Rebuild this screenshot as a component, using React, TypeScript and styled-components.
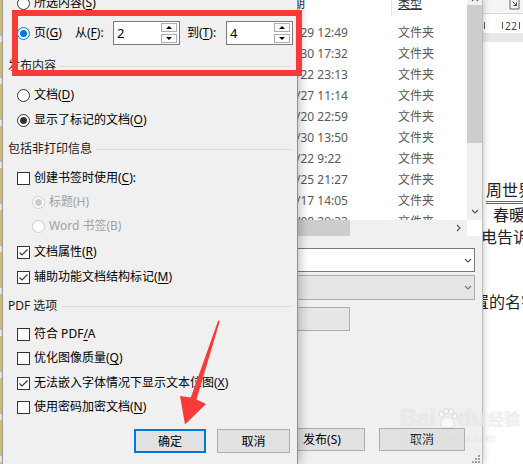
import React from "react";
import styled, { createGlobalStyle } from "styled-components";

const Global = createGlobalStyle`
  html, body { margin: 0; padding: 0; background: #fff; }
  body { font-family: "Noto Sans", "Noto Sans CJK SC", sans-serif; }
`;

const FONT = `"Noto Sans", "Noto Sans CJK SC", sans-serif`;

const Desktop = styled.div`
  position: relative;
  width: 523px;
  height: 464px;
  overflow: hidden;
  display: flex;
  font-family: ${FONT};
  font-size: 12px;
  line-height: 16px;
  color: #000;
  background: #fff;
`;

const LeftEdge = styled.div`
  width: 2px;
  flex: none;
  background: repeating-linear-gradient(
    to bottom,
    #d9c47c 0 34px,
    #bdbdbd 34px 36px,
    #ededed 36px 42px
  );
`;

/* ---------- Options dialog ---------- */

const OptionsDialog = styled.div`
  position: relative;
  z-index: 3;
  width: 296px;
  flex: none;
  box-sizing: border-box;
  background: #f0f0f0;
  border-left: 1px solid #9a9a9a;
  border-right: 1px solid #8f8f8f;
  box-shadow: 3px 0 9px rgba(0, 0, 0, 0.22);
  display: flex;
  flex-direction: column;
  padding-left: 5px;
`;

const Row = styled.div<{ $mt: number; $indent?: number }>`
  height: 24px;
  flex: none;
  display: flex;
  align-items: center;
  margin-top: ${(p) => p.$mt}px;
  padding-left: ${(p) => p.$indent ?? 0}px;
  white-space: nowrap;
`;

const GroupTitle = styled.span`
  color: #1a1a1a;
`;

const GroupLine = styled.span`
  flex: 1;
  height: 1px;
  background: #dcdcdc;
  margin: 1px 6px 0 4px;
`;

type RadioState = "off" | "on" | "blue" | "disOn" | "disOff";

const radioBorder: Record<RadioState, string> = {
  off: "#333333",
  on: "#333333",
  blue: "#0078d7",
  disOn: "#cccccc",
  disOff: "#cccccc",
};
const radioDot: Record<RadioState, string> = {
  off: "transparent",
  on: "#333333",
  blue: "#0078d7",
  disOn: "#cccccc",
  disOff: "transparent",
};

const RadioCircle = styled.span<{ $state: RadioState }>`
  width: 13px;
  height: 13px;
  box-sizing: border-box;
  border-radius: 50%;
  border: 1px solid ${(p) => radioBorder[p.$state]};
  background: #fff;
  flex: none;
  display: flex;
  align-items: center;
  justify-content: center;
  &::after {
    content: "";
    width: 7px;
    height: 7px;
    border-radius: 50%;
    background: ${(p) => radioDot[p.$state]};
  }
`;

const CheckBox = styled.span`
  width: 13px;
  height: 13px;
  box-sizing: border-box;
  border: 1px solid #333;
  background: #fff;
  flex: none;
  display: flex;
  align-items: center;
  justify-content: center;
`;

const Label = styled.span<{ $disabled?: boolean }>`
  margin-left: 4px;
  color: ${(p) => (p.$disabled ? "#a2a2a2" : "#000")};
`;

const U = styled.span`
  text-decoration: underline;
  text-underline-offset: 2px;
`;

const RadioItem = styled.div<{ $w?: number }>`
  display: flex;
  align-items: center;
  width: ${(p) => (p.$w ? `${p.$w}px` : "auto")};
  flex: none;
`;

const FieldLabel = styled.span<{ $w: number; $ml?: number }>`
  width: ${(p) => p.$w}px;
  margin-left: ${(p) => p.$ml ?? 0}px;
  flex: none;
`;

const Spin = styled.div`
  width: 67px;
  height: 24px;
  box-sizing: border-box;
  border: 1px solid #7a7a7a;
  background: #fff;
  display: flex;
  align-items: center;
  padding: 0 2px 0 3px;
  flex: none;
`;

const SpinValue = styled.span`
  flex: 1;
  font-size: 13px;
`;

const SpinButtons = styled.div`
  display: flex;
  flex-direction: column;
  gap: 2px;
  width: 16px;
`;

const SpinBtn = styled.div<{ $up?: boolean }>`
  height: 9px;
  box-sizing: border-box;
  border: 1px solid #adadad;
  background: #fcfcfc;
  display: flex;
  align-items: center;
  justify-content: center;
  &::after {
    content: "";
    border-left: 3px solid transparent;
    border-right: 3px solid transparent;
    ${(p) =>
      p.$up ? "border-bottom: 3px solid #000;" : "border-top: 3px solid #000;"}
  }
`;

const ButtonRow = styled.div`
  display: flex;
  justify-content: flex-end;
  gap: 11px;
  padding-right: 7px;
  margin-top: 10px;
`;

const DialogButton = styled.button<{ $primary?: boolean; $w: number }>`
  width: ${(p) => p.$w}px;
  height: 24px;
  box-sizing: border-box;
  background: #e1e1e1;
  border: ${(p) => (p.$primary ? "2px solid #0078d7" : "1px solid #adadad")};
  font-family: ${FONT};
  font-size: 12px;
  color: #000;
  padding: 0;
`;

/* ---------- Publish window (behind) ---------- */

const PublishWindow = styled.div`
  position: relative;
  z-index: 2;
  width: 185px;
  flex: none;
  box-sizing: border-box;
  background: #f0f0f0;
  border-right: 1px solid #bcbcbc;
  box-shadow: 2px 0 5px rgba(0, 0, 0, 0.16);
  display: flex;
  flex-direction: column;
  overflow: hidden;
`;

const ListArea = styled.div`
  display: flex;
  height: 220px;
  flex: none;
`;

const ListBody = styled.div`
  width: 169px;
  background: #fff;
  overflow: hidden;
  display: flex;
  flex-direction: column;
  color: #595959;
`;

const ListHeader = styled.div`
  display: flex;
  height: 28px;
  margin-top: -6px;
  flex: none;
  align-items: flex-start;
`;

const HeaderDate = styled.span`
  width: 95px;
  margin-left: -5px;
  padding-top: 2px;
  color: #333;
  flex: none;
`;

const HeaderSep = styled.span`
  width: 1px;
  height: 22px;
  background: #e5e5e5;
  flex: none;
  margin-left: 3px;
`;

const HeaderType = styled.span`
  padding: 2px 0 0 6px;
  color: #333;
  text-decoration: underline;
  text-underline-offset: 1px;
`;

const ListRow = styled.div`
  display: flex;
  height: 21px;
  align-items: center;
  flex: none;
`;

const DateCell = styled.span`
  width: 102px;
  margin-left: -2px;
  flex: none;
`;

const VScroll = styled.div`
  width: 15px;
  background: #f0f0f0;
  display: flex;
  flex-direction: column;
  align-items: stretch;
`;

const ScrollArrow = styled.div<{ $h: number; $w?: number; $top?: boolean }>`
  height: ${(p) => p.$h}px;
  width: ${(p) => (p.$w ? `${p.$w}px` : "auto")};
  flex: none;
  display: flex;
  align-items: ${(p) => (p.$top ? "flex-start" : "center")};
  margin-top: ${(p) => (p.$top ? "-3px" : "0")};
  justify-content: center;
`;

const VThumb = styled.div`
  height: 138px;
  background: #cdcdcd;
  flex: none;
`;

const Spacer = styled.div`
  flex: 1;
`;

const HScrollRow = styled.div`
  display: flex;
  height: 16px;
  flex: none;
`;

const HScroll = styled.div`
  width: 169px;
  background: #f0f0f0;
  display: flex;
  align-items: stretch;
`;

const HThumb = styled.div`
  width: 52px;
  background: #cdcdcd;
`;

const Corner = styled.div`
  flex: 1;
  background: #fff;
`;

const Select = styled.div<{ $disabled?: boolean; $h: number; $mt: number }>`
  height: ${(p) => p.$h}px;
  margin-top: ${(p) => p.$mt}px;
  margin-right: 7px;
  margin-left: -4px;
  box-sizing: border-box;
  border: 1px solid ${(p) => (p.$disabled ? "#adadad" : "#7a7a7a")};
  background: ${(p) => (p.$disabled ? "#e5e5e5" : "#fff")};
  display: flex;
  align-items: center;
  justify-content: flex-end;
  padding-right: 2px;
  flex: none;
`;

const TextBox = styled.div`
  width: 56px;
  height: 24px;
  margin-top: 7px;
  margin-left: -4px;
  box-sizing: border-box;
  border: 1px solid #adadad;
  background: #e6e6e6;
  flex: none;
`;

const PubButtons = styled.div`
  margin-top: auto;
  margin-bottom: 13px;
  display: flex;
  justify-content: flex-end;
  gap: 14px;
  padding-right: 17px;
`;

const PubButton = styled.div`
  width: 86px;
  height: 23px;
  flex: none;
  box-sizing: border-box;
  background: #e1e1e1;
  border: 1px solid #adadad;
  display: flex;
  align-items: center;
  justify-content: center;
  color: #000;
`;

const Grip = styled.svg`
  position: absolute;
  right: 2px;
  bottom: 1px;
`;

/* ---------- Word page (far behind) ---------- */

const WordPage = styled.div`
  flex: 1;
  background: #fff;
  display: flex;
  flex-direction: column;
  overflow: hidden;
  font-family: "Noto Sans CJK SC", sans-serif;
`;

const RibbonStrip = styled.div`
  height: 13px;
  flex: none;
  background: #f5f5f5;
  border-bottom: 1px solid #d5d5d5;
  display: flex;
  justify-content: flex-end;
  align-items: flex-start;
  padding-right: 3px;
`;

const Ruler = styled.div`
  height: 19px;
  flex: none;
  display: flex;
  align-items: center;
  padding-top: 4px;
  box-sizing: border-box;
  font-family: ${FONT};
  font-size: 10px;
  color: #444;
`;

const Tick = styled.span<{ $ml: number }>`
  width: 1px;
  height: 7px;
  background: #555;
  margin-left: ${(p) => p.$ml}px;
  flex: none;
`;

const RulerNum = styled.span`
  margin: 0 2px;
  letter-spacing: 0.5px;
`;

const GreyBand = styled.div`
  height: 9px;
  flex: none;
  background: #e8e8e8;
`;

const PageLine = styled.div<{ $mt: number; $ml: number }>`
  height: 22px;
  flex: none;
  margin-top: ${(p) => p.$mt}px;
  margin-left: ${(p) => p.$ml}px;
  font-size: 16px;
  line-height: 22px;
  color: #222;
  white-space: nowrap;
`;

const Linked = styled.span`
  border-bottom: 3px double #3a68c8;
  padding-bottom: 0;
`;

/* ---------- overlays ---------- */

const RedBox = styled.div`
  position: absolute;
  left: 12px;
  top: 10px;
  width: 290px;
  height: 66px;
  box-sizing: border-box;
  border: 6px solid #f83a3b;
  z-index: 10;
  pointer-events: none;
`;

const ArrowSvg = styled.svg`
  position: absolute;
  left: 0;
  top: 0;
  z-index: 10;
  pointer-events: none;
`;

const Watermark = styled.div`
  position: absolute;
  left: 400px;
  top: 404px;
  z-index: 9;
  display: flex;
  flex-direction: column;
  align-items: flex-start;
  color: rgba(255, 255, 255, 0.55);
  text-shadow: 0 0 1px rgba(150, 150, 150, 0.35);
  pointer-events: none;
`;

const WatermarkMain = styled.div`
  display: flex;
  align-items: center;
  font-family: "Liberation Sans", sans-serif;
  font-weight: bold;
  font-size: 23px;
  line-height: 28px;
`;

const WatermarkCn = styled.span`
  font-family: "Noto Sans CJK SC", sans-serif;
  font-size: 16px;
  margin-left: 2px;
`;

const WatermarkSub = styled.div`
  font-family: "Liberation Sans", sans-serif;
  font-size: 11px;
  line-height: 12px;
  margin-left: 2px;
  letter-spacing: 0.3px;
`;

/* ---------- small drawings ---------- */

const Check = () => (
  <svg width="11" height="11" viewBox="0 0 11 11">
    <polyline points="1.5,5.5 4,8 9.5,2.5" fill="none" stroke="#333" strokeWidth="1.1" />
  </svg>
);

const Chevron = ({ dir, color = "#444" }: { dir: "up" | "down" | "right"; color?: string }) => {
  const pts =
    dir === "down" ? "1,1 4,4 7,1" : dir === "up" ? "1,4 4,1 7,4" : "1,1 4,4 1,7";
  const w = dir === "right" ? 6 : 8;
  const h = dir === "right" ? 8 : 5;
  return (
    <svg width={w} height={h} viewBox={`0 0 ${w} ${h}`}>
      <polyline points={pts} fill="none" stroke={color} strokeWidth="1.2" />
    </svg>
  );
};

type RadioProps = { state: RadioState; children: React.ReactNode; disabled?: boolean; w?: number };
const Radio = ({ state, children, disabled, w }: RadioProps) => (
  <RadioItem $w={w}>
    <RadioCircle $state={state} />
    <Label $disabled={disabled}>{children}</Label>
  </RadioItem>
);

const Checkbox = ({ checked, children }: { checked?: boolean; children: React.ReactNode }) => (
  <RadioItem>
    <CheckBox>{checked && <Check />}</CheckBox>
    <Label>{children}</Label>
  </RadioItem>
);

const SpinBox = ({ value }: { value: string }) => (
  <Spin>
    <SpinValue>{value}</SpinValue>
    <SpinButtons>
      <SpinBtn $up />
      <SpinBtn />
    </SpinButtons>
  </Spin>
);

const Group = ({ mt, title }: { mt: number; title: string }) => (
  <Row $mt={mt}>
    <GroupTitle>{title}</GroupTitle>
    <GroupLine />
  </Row>
);

const rows = [
  "/29 12:49",
  "/30 17:32",
  "/22 23:13",
  "/27 11:14",
  "/20 22:59",
  "/30 13:50",
  "/22 9:22",
  "/25 21:27",
  "/17 14:05",
  "/08 20:33",
];

export default function App() {
  return (
    <>
      <Global />
      <Desktop>
        <LeftEdge />
        <OptionsDialog>
          <Row $mt={-9} $indent={9}>
            <Radio state="off">
              所选内容(<U>S</U>)
            </Radio>
          </Row>
          <Row $mt={6} $indent={9}>
            <Radio state="blue" w={58}>
              页(<U>G</U>)
            </Radio>
            <FieldLabel $w={38}>
              从(<U>F</U>):
            </FieldLabel>
            <SpinBox value="2" />
            <FieldLabel $w={39} $ml={7}>
              到(<U>T</U>):
            </FieldLabel>
            <SpinBox value="4" />
          </Row>
          <Group mt={9} title="发布内容" />
          <Row $mt={5} $indent={9}>
            <Radio state="off">
              文档(<U>D</U>)
            </Radio>
          </Row>
          <Row $mt={1} $indent={9}>
            <Radio state="on">
              显示了标记的文档(<U>O</U>)
            </Radio>
          </Row>
          <Group mt={5} title="包括非打印信息" />
          <Row $mt={5} $indent={9}>
            <Checkbox>
              创建书签时使用(<U>C</U>):
            </Checkbox>
          </Row>
          <Row $mt={0} $indent={24}>
            <Radio state="disOn" disabled>
              标题(H)
            </Radio>
          </Row>
          <Row $mt={0} $indent={24}>
            <Radio state="disOff" disabled>
              Word 书签(B)
            </Radio>
          </Row>
          <Row $mt={2} $indent={9}>
            <Checkbox checked>
              文档属性(<U>R</U>)
            </Checkbox>
          </Row>
          <Row $mt={1} $indent={9}>
            <Checkbox checked>
              辅助功能文档结构标记(<U>M</U>)
            </Checkbox>
          </Row>
          <Group mt={5} title="PDF 选项" />
          <Row $mt={4} $indent={9}>
            <Checkbox>
              符合 PDF<U>/</U>A
            </Checkbox>
          </Row>
          <Row $mt={0} $indent={9}>
            <Checkbox>
              优化图像质量(<U>Q</U>)
            </Checkbox>
          </Row>
          <Row $mt={1} $indent={9}>
            <Checkbox checked>
              无法嵌入字体情况下显示文本位图(<U>X</U>)
            </Checkbox>
          </Row>
          <Row $mt={0} $indent={9}>
            <Checkbox>
              使用密码加密文档(<U>N</U>)
            </Checkbox>
          </Row>
          <ButtonRow>
            <DialogButton $primary $w={72}>
              确定
            </DialogButton>
            <DialogButton $w={73}>取消</DialogButton>
          </ButtonRow>
        </OptionsDialog>

        <PublishWindow>
          <ListArea>
            <ListBody>
              <ListHeader>
                <HeaderDate>期</HeaderDate>
                <HeaderSep />
                <HeaderType>类型</HeaderType>
              </ListHeader>
              {rows.map((d) => (
                <ListRow key={d}>
                  <DateCell>{d}</DateCell>
                  <span>文件夹</span>
                </ListRow>
              ))}
            </ListBody>
            <VScroll>
              <ScrollArrow $h={8} $top>
                <Chevron dir="up" color="#666" />
              </ScrollArrow>
              <VThumb />
              <Spacer />
              <ScrollArrow $h={17}>
                <Chevron dir="down" color="#555" />
              </ScrollArrow>
            </VScroll>
          </ListArea>
          <HScrollRow>
            <HScroll>
              <HThumb />
              <Spacer />
              <ScrollArrow $h={16} $w={17}>
                <Chevron dir="right" color="#555" />
              </ScrollArrow>
            </HScroll>
            <Corner />
          </HScrollRow>
          <Select $h={24} $mt={12}>
            <Chevron dir="down" color="#555" />
          </Select>
          <Select $h={25} $mt={3} $disabled>
            <Chevron dir="down" color="#777" />
          </Select>
          <TextBox />
          <PubButtons>
            <PubButton>发布(S)</PubButton>
            <PubButton>取消</PubButton>
          </PubButtons>
          <Grip width="8" height="8" viewBox="0 0 8 8">
            {[
              [6, 0],
              [6, 3],
              [3, 3],
              [6, 6],
              [3, 6],
              [0, 6],
            ].map(([x, y]) => (
              <rect key={`${x}-${y}`} x={x} y={y} width="2" height="2" fill="#a0a0a0" />
            ))}
          </Grip>
        </PublishWindow>

        <WordPage>
          <RibbonStrip>
            <svg width="11" height="10" viewBox="0 0 11 10">
              <polyline points="1,0 1,9 10,9 10,0" fill="none" stroke="#666" strokeWidth="1" />
              <line x1="3.5" y1="1.5" x2="7.5" y2="5.5" stroke="#444" strokeWidth="1" />
              <polyline points="7.5,2.5 7.5,5.5 4.5,5.5" fill="none" stroke="#444" strokeWidth="1" />
            </svg>
          </RibbonStrip>
          <Ruler>
            <Tick $ml={1} />
            <Tick $ml={17} />
            <RulerNum>22</RulerNum>
            <Tick $ml={0} />
          </Ruler>
          <GreyBand />
          <PageLine $mt={136} $ml={3}>
            <Linked>周世界</Linked>
          </PageLine>
          <PageLine $mt={3} $ml={10}>
            春暖
          </PageLine>
          <PageLine $mt={0} $ml={-2}>
            电告诉
          </PageLine>
          <PageLine $mt={43} $ml={-10}>
            置的名字
          </PageLine>
        </WordPage>

        <RedBox />
        <ArrowSvg width="523" height="464" viewBox="0 0 523 464">
          <polygon
            points="218.2,320.6 219.8,321.2 196.5,399.5 206,404 185,424.5 180,396 190.8,397.6"
            fill="#f83a3b"
          />
        </ArrowSvg>
        <Watermark>
          <WatermarkMain>
            Bai
            <svg width="22" height="22" viewBox="0 0 24 24">
              <g fill="rgba(255,255,255,0.55)" stroke="rgba(150,150,150,0.35)" strokeWidth="0.8">
                <ellipse cx="6" cy="8" rx="2.6" ry="3.2" />
                <ellipse cx="11" cy="4.5" rx="2.6" ry="3.2" />
                <ellipse cx="16.5" cy="5" rx="2.6" ry="3.2" />
                <ellipse cx="20.5" cy="10" rx="2.4" ry="3" />
                <path d="M5 19 C5 13 9 11 12.5 11 C16 11 20 13 20 19 C20 22 17 23 12.5 23 C8 23 5 22 5 19 Z" />
              </g>
            </svg>
            du
            <WatermarkCn>经验</WatermarkCn>
          </WatermarkMain>
          <WatermarkSub>jingyan.baidu.com</WatermarkSub>
        </Watermark>
      </Desktop>
    </>
  );
}
